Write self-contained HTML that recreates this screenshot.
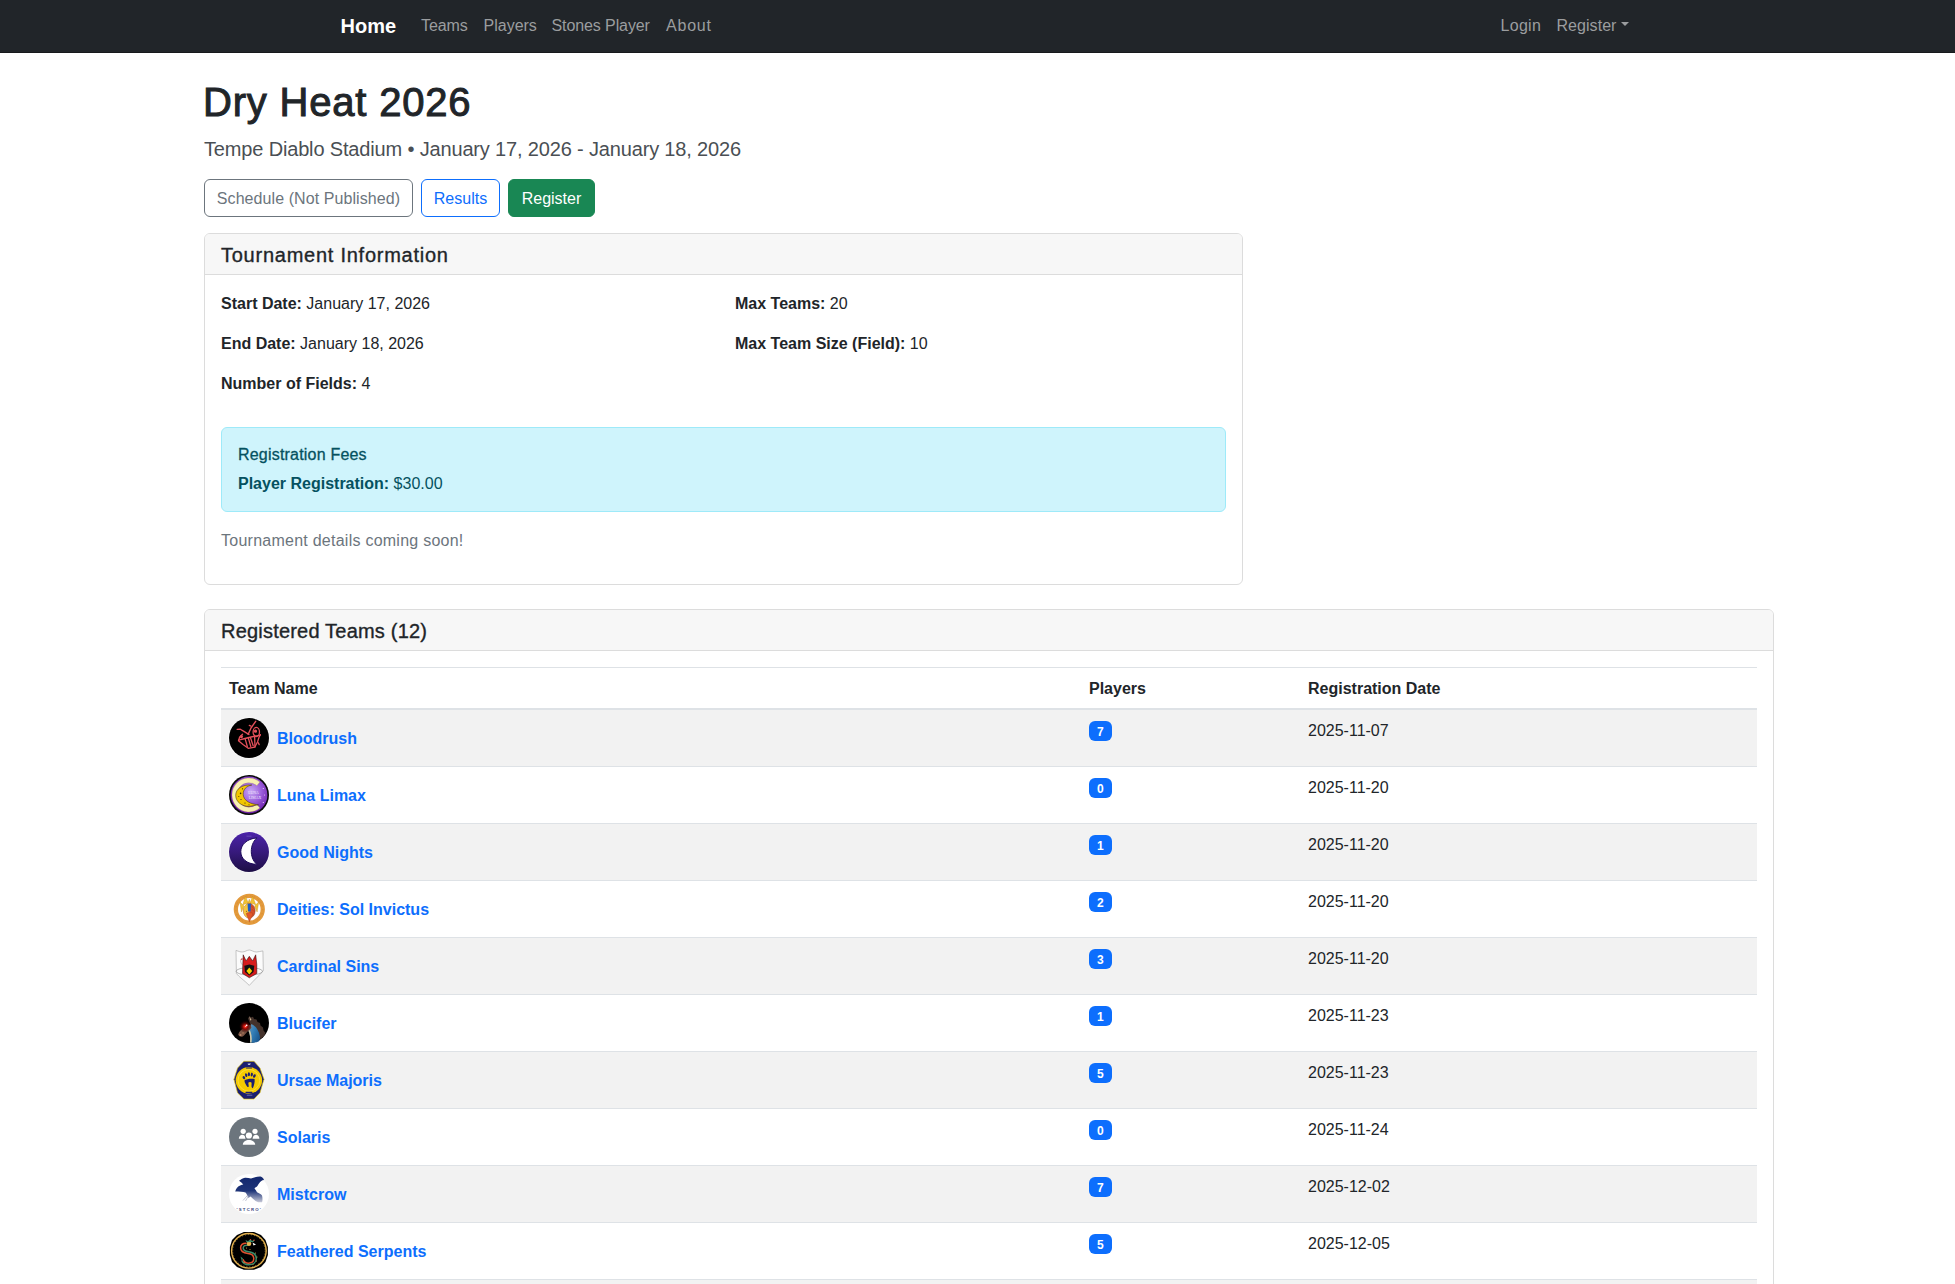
<!DOCTYPE html>
<html><head><meta charset="utf-8"><title>Dry Heat 2026</title>
<style>
*{box-sizing:border-box;margin:0;padding:0}
html,body{width:1955px;height:1284px;overflow:hidden;background:#fff}
body{font-family:"Liberation Sans",sans-serif;font-size:16px;line-height:24px;color:#212529;position:relative}
b,strong{font-weight:700}
.nav{position:absolute;left:0;top:0;width:1955px;height:53px;background:#212529;border-bottom:1px solid #17191c}
.nav span{position:absolute;top:14px;line-height:24px;white-space:nowrap;color:#9b9d9f}
.nav .brand{color:#fff;font-size:20px;font-weight:700;top:11px;line-height:30px}
.caret{position:absolute;left:1621px;top:22px;width:0;height:0;border-left:4px solid transparent;border-right:4px solid transparent;border-top:4px solid #9b9d9f}
.main{position:absolute;left:204px;top:77px;width:1570px}
h1{font-size:40px;line-height:48px;font-weight:400;margin-bottom:8px;color:#212529;letter-spacing:0.8px;-webkit-text-stroke:1px #212529;position:relative;top:1px;left:-1px}
.lead{font-size:20px;line-height:30px;font-weight:400;margin-bottom:16px;color:#4a4f54;letter-spacing:-0.16px;position:relative;top:1px}
.btns{height:38px;margin-bottom:16px;position:relative}
.btn{position:absolute;top:0;height:38px;border:1px solid;border-radius:6px;text-align:center;line-height:36px;font-size:16px;white-space:nowrap}
.b1{left:0;width:209px;color:#6c757d;border-color:#6c757d}
.b2{left:217px;width:79px;color:#0d6efd;border-color:#0d6efd}
.b3{left:304px;width:87px;color:#fff;background:#198754;border-color:#198754}
.card{border:1px solid #dcdcdc;border-radius:6px;background:#fff;overflow:hidden}
.card-h{background:#f7f7f7;border-bottom:1px solid #dcdcdc;padding:8px 16px;height:41px}
.card-h h5{font-size:20px;line-height:24px;font-weight:400;color:#212529;-webkit-text-stroke:0.35px #212529;position:relative;top:1px}
.card-b{padding:16px}
.c1{width:1039px;height:352px;margin-bottom:24px}
.row{display:flex}
.col{width:514px;flex:none}
.col p{margin-bottom:16px;position:relative;top:1px}
.alert{margin-top:16px;background:#cff4fc;border:1px solid #9eeaf9;border-radius:6px;padding:16px;color:#055160;height:85px}
.alert h6{font-size:16px;line-height:19px;font-weight:400;margin-bottom:8px;-webkit-text-stroke:0.3px #055160;position:relative;top:1px;letter-spacing:0.2px}
.alert p{position:relative;top:1px}
.muted{color:#6c757d;margin-top:16px;position:relative;top:1px;letter-spacing:0.25px}
.c2{width:1570px;height:700px}
table{border-collapse:collapse;width:1536px;table-layout:fixed}
th{text-align:left;font-weight:700;padding:9px 8px 7px;height:40px;vertical-align:top}
thead tr{border-top:1px solid #dee2e6;border-bottom:2px solid #dee2e6}
tbody tr{border-bottom:1px solid #dee2e6;height:57px}
tbody tr.s td{background:#f2f2f2}
td{padding:8px;vertical-align:top}
td .d{position:relative;top:1px}
.tn{display:flex;align-items:center;height:40px}
.logo{width:40px;height:40px;flex:none;margin-right:8px;display:block;overflow:visible}
.tn a{color:#0d6efd;font-weight:700;text-decoration:none;position:relative;top:1px}
.badge{display:inline-block;background:#0d6efd;color:#fff;font-size:12px;font-weight:700;line-height:12px;padding:5px 8px 3px;border-radius:6px;margin-top:3px;vertical-align:top;height:20px}
</style></head><body>
<div class="nav">
  <span class="brand" style="left:340.5px">Home</span>
  <span style="left:421px;letter-spacing:-0.1px">Teams</span>
  <span style="left:483.5px">Players</span>
  <span style="left:551.5px;letter-spacing:-0.1px">Stones Player</span>
  <span style="left:666px;letter-spacing:0.8px">About</span>
  <span style="left:1500.5px;letter-spacing:0.3px">Login</span>
  <span style="left:1556.5px;letter-spacing:0.05px">Register</span>
  <i class="caret"></i>
</div>
<div class="main">
  <h1>Dry Heat 2026</h1>
  <p class="lead">Tempe Diablo Stadium • January 17, 2026 - January 18, 2026</p>
  <div class="btns">
    <div class="btn b1"><span style="position:relative;top:1px;letter-spacing:0.08px">Schedule (Not Published)</span></div>
    <div class="btn b2"><span style="position:relative;top:1px">Results</span></div>
    <div class="btn b3"><span style="position:relative;top:1px">Register</span></div>
  </div>
  <div class="card c1">
    <div class="card-h"><h5 style="letter-spacing:0.75px">Tournament Information</h5></div>
    <div class="card-b">
      <div class="row">
        <div class="col">
          <p><b>Start Date:</b> January 17, 2026</p>
          <p><b>End Date:</b> January 18, 2026</p>
          <p><b>Number of Fields:</b> 4</p>
        </div>
        <div class="col">
          <p><b>Max Teams:</b> 20</p>
          <p><b>Max Team Size (Field):</b> 10</p>
        </div>
      </div>
      <div class="alert">
        <h6>Registration Fees</h6>
        <p><b>Player Registration:</b> $30.00</p>
      </div>
      <p class="muted">Tournament details coming soon!</p>
    </div>
  </div>
  <div class="card c2">
    <div class="card-h"><h5 style="letter-spacing:0.2px">Registered Teams (12)</h5></div>
    <div class="card-b">
      <table>
        <colgroup><col style="width:860px"><col style="width:219px"><col style="width:457px"></colgroup>
        <thead><tr><th>Team Name</th><th>Players</th><th>Registration Date</th></tr></thead>
        <tbody>
<tr class="s"><td><div class="tn"><svg class="logo" viewBox="0 0 40 40"><circle cx="20" cy="20" r="20.6" fill="#fff" opacity="0.85"/><circle cx="20" cy="20" r="20" fill="#000"/>
<g fill="none" stroke="#e5505a" stroke-width="1.3" stroke-linecap="round" stroke-linejoin="round">
<path d="M26.7,3.3 L22,10 L19.2,16.3" stroke-width="1.4"/>
<path d="M8.1,11.3 L11.3,11.2 L14.9,13.4 L18.5,15.6 L20,16.5"/>
<path d="M20.3,7.4 L22,8.1"/>
<ellipse cx="27.3" cy="14" rx="3.2" ry="4.6"/>
<path d="M13.5,16.3 L10.6,19.2 L9.5,22.8 L14,26.5 L19.2,30.3 L25.7,29.2 L28.5,24 L30,19.2 L31.4,16.6"/>
<path d="M9.6,22.2 L16,20.5 L22,19 L31.3,17.2"/>
<path d="M16.3,21.3 L18.3,28.5 M19.4,20.3 L21.8,28.5 M21.5,19.8 L24.2,27.8 M25.6,17.2 L26,29"/>
<path d="M29.3,24.8 L30.2,26.6"/>
</g>
<circle cx="26.5" cy="13.2" r="1.6" fill="#e5505a"/><circle cx="12.4" cy="18.6" r="1.6" fill="#e5505a"/>
</svg><a>Bloodrush</a></div></td><td><span class="badge">7</span></td><td><span class="d">2025-11-07</span></td></tr>
<tr><td><div class="tn"><svg class="logo" viewBox="0 0 40 40"><defs><radialGradient id="lg1" cx="0.55" cy="0.4" r="0.6"><stop offset="0" stop-color="#c9a8f4"/><stop offset="0.5" stop-color="#9a5cda"/><stop offset="1" stop-color="#6a1aa8"/></radialGradient></defs>
<circle cx="20" cy="20" r="20" fill="#0a0a0a"/><circle cx="20" cy="20" r="18.4" fill="url(#lg1)"/>
<path d="M30.9,7 A17,17 0 1 0 30.9,33 L27.8,29.35 A12.2,12.2 0 1 1 27.8,10.65 Z" fill="#f8f0b2" stroke="#9a8040" stroke-width="0.25"/>
<path d="M22.8,10 C13,9.3 6.7,14 6.7,20.3 C6.7,27 13,31.5 20,31.4 L29.5,29.8 C22,29.3 14.6,26 14.2,19.5 C13.9,14.5 17.5,11 22.8,10 Z" fill="#f2c600" stroke="#3a2a00" stroke-width="0.5"/>
<g fill="#3a2a00"><circle cx="13.5" cy="13.8" r="0.6"/><circle cx="11.6" cy="18.4" r="0.8"/><circle cx="12" cy="24.5" r="0.6"/><circle cx="16" cy="28" r="0.6"/><circle cx="20" cy="29.8" r="0.5"/><circle cx="9.8" cy="21.5" r="0.5"/></g>
<text x="24.5" y="19.4" font-family="Liberation Serif" font-size="3.8" fill="#f2e8ff" text-anchor="middle">LUNA</text>
<text x="26" y="23.6" font-family="Liberation Serif" font-size="3.8" fill="#f2e8ff" text-anchor="middle">LIMAX</text>
<g fill="#f4e0ff"><circle cx="34.3" cy="13.5" r="0.6"/><circle cx="35.6" cy="20" r="0.5"/><circle cx="34.3" cy="27.5" r="0.6"/></g>
</svg><a>Luna Limax</a></div></td><td><span class="badge">0</span></td><td><span class="d">2025-11-20</span></td></tr>
<tr class="s"><td><div class="tn"><svg class="logo" viewBox="0 0 40 40"><defs><linearGradient id="gg1" x1="0" y1="0" x2="0" y2="1"><stop offset="0" stop-color="#4c23aa"/><stop offset="0.5" stop-color="#371a7c"/><stop offset="1" stop-color="#1d0e45"/></linearGradient></defs>
<circle cx="20" cy="20" r="20.6" fill="#fff" opacity="0.85"/><circle cx="20" cy="20" r="20" fill="url(#gg1)"/>
<path d="M27.8,5.9 C17.5,6.8 11.8,13 11.8,19.6 C11.8,26.5 17.5,32 27.8,32.4 C23.5,28.5 22.3,23.5 22.3,19.4 C22.3,14.5 23.8,9.8 27.8,5.9 Z" fill="#fff" stroke="#1c0a5a" stroke-width="1"/>
<rect x="17.5" y="3.8" width="5" height="0.6" fill="#7a66c0"/>
</svg><a>Good Nights</a></div></td><td><span class="badge">1</span></td><td><span class="d">2025-11-20</span></td></tr>
<tr><td><div class="tn"><svg class="logo" viewBox="0 0 40 40">
<circle cx="20.3" cy="20.3" r="13.45" fill="none" stroke="#e39a3c" stroke-width="4.3"/>
<circle cx="20.3" cy="20.3" r="13.45" fill="none" stroke="#b86a20" stroke-width="0.6" stroke-dasharray="1 3" opacity="0.6"/>
<g fill="#f2c232" stroke="#c08818" stroke-width="0.35" stroke-linejoin="round">
<path d="M20.3,10.2 L22,15 L18.6,15 Z"/>
<path d="M16.3,7.2 L19.4,14 L13.8,15.8 Z"/>
<path d="M23.6,7.2 L26.8,15.8 L21.2,14 Z"/>
<path d="M10.8,12.8 L15,17 L12.5,23 Z"/>
<path d="M29.8,12.8 L28.1,23 L25.6,17 Z"/>
</g>
<ellipse cx="20.3" cy="21.8" rx="5.9" ry="7.3" fill="#d5502a" stroke="#7a3a18" stroke-width="0.45"/>
<path d="M20.3,14.5 C17,14.5 14.4,17.5 14.4,21.8 C14.4,25.5 16.5,28.5 20.3,29.1 Z" fill="#f5c640"/>
<path d="M18.6,14.8 L22,14.8 L21.6,22.5 L19,22.5 Z" fill="#1e5ec4"/>
<circle cx="17.4" cy="22.3" r="0.5" fill="#6a3a10"/>
<path d="M17.2,24.5 C18.5,23.3 22.5,23.3 24,24.5 C23,27.5 21.5,30 20.4,32.8 C19.5,30 18,27 17.2,24.5 Z" fill="#e2582a" stroke="#9a3010" stroke-width="0.3"/>
<path d="M22.5,17 L24.5,19.5 M22.8,20 L25,22.5" stroke="#a83a1a" stroke-width="0.4"/>
</svg><a>Deities: Sol Invictus</a></div></td><td><span class="badge">2</span></td><td><span class="d">2025-11-20</span></td></tr>
<tr class="s"><td><div class="tn"><svg class="logo" viewBox="0 0 40 40">
<path d="M7,4.4 C10,5.5 11.5,6 13.1,6 C16,6 18,4 20.3,4 C22.5,4 24.5,6 27.5,6 C29.5,6 31.5,5.2 33.9,4.9 L34.3,24.5 C31,29 26,33 20.3,39.4 C15,34 10,31 7.4,27.5 Z" fill="#fbfbfb" stroke="#9a9a9a" stroke-width="0.55"/>
<ellipse cx="20.3" cy="25.3" rx="13.2" ry="3.7" fill="none" stroke="#8a8a8a" stroke-width="0.6"/>
<path d="M13.5,19 C11.5,17 11.2,14.5 12.3,13.4" fill="none" stroke="#8a8a8a" stroke-width="0.5"/>
<path d="M11.4,13.6 L13.3,12 L13.3,13.8 Z" fill="#d01818"/>
<path d="M14.2,8.8 L17.1,14.9 L20.3,10.3 L23.6,14.9 L26.7,8.8 L27.8,18.5 L27.8,27.5 L20.3,31.8 L13.5,27.5 L13.8,18.5 Z" fill="#d61c1c" stroke="#1a0000" stroke-width="0.5" stroke-linejoin="round"/>
<path d="M15.3,19.8 L20.3,18.5 L25.3,19.8 L24.5,26 L20.3,29.6 L16,26 Z" fill="#111"/>
<path d="M20.3,21.6 L23.2,24.9 L20.3,28.4 L17.4,24.9 Z" fill="#f5d000"/>
</svg><a>Cardinal Sins</a></div></td><td><span class="badge">3</span></td><td><span class="d">2025-11-20</span></td></tr>
<tr><td><div class="tn"><svg class="logo" viewBox="0 0 40 40"><defs><radialGradient id="bg1" cx="0.44" cy="0.56" r="0.28"><stop offset="0" stop-color="#fff"/><stop offset="0.1" stop-color="#ff2a1a"/><stop offset="0.4" stop-color="#8a0806"/><stop offset="1" stop-color="#200000" stop-opacity="0"/></radialGradient>
<linearGradient id="bg2" x1="0" y1="0" x2="1" y2="0.6"><stop offset="0" stop-color="#7a9ab0"/><stop offset="0.5" stop-color="#3480b8"/><stop offset="1" stop-color="#1c5a92"/></linearGradient></defs>
<circle cx="20" cy="20" r="20" fill="#000"/>
<path d="M19,15.5 L20.5,13 L22,14.5 L24,13.8 L25,16 L27.5,16.5 L28.5,19 L31,20 L31.5,22.5 L34,24.5 L34.5,27.5 L36.5,30 L35,33 L32,35.5 L28,37 L24,28 Z" fill="#44322b"/>
<path d="M20.5,13.5 L22.5,17 L21,17.5 Z" fill="#c8b090"/>
<path d="M22.5,21 C27,23 30,28 30.8,33 C31.2,35.5 30.8,37 30,38.2 C27,39.6 23.5,40 21,39.6 C21.5,35 21,30 19,27 Z" fill="url(#bg2)"/>
<path d="M21,39.6 C21.5,35 21,30 19,27 L20.2,26 C22.5,29.5 23.2,34.5 22.6,39.6 Z" fill="#cfc7a8"/>
<path d="M9.2,31.5 C10,28.5 13,25.8 16.5,23.8 L21.5,21.5 L22.5,24.8 C20,27 17.5,29.5 15,32.5 C13.2,34.5 10.2,34 9.2,31.5 Z" fill="#7a5444"/>
<circle cx="11.5" cy="32" r="1" fill="#c08a6a"/><circle cx="14" cy="30" r="0.8" fill="#b07a5a"/>
<circle cx="17.6" cy="22.3" r="11" fill="url(#bg1)"/>
<circle cx="17.6" cy="22.3" r="0.9" fill="#fff"/>
</svg><a>Blucifer</a></div></td><td><span class="badge">1</span></td><td><span class="d">2025-11-23</span></td></tr>
<tr class="s"><td><div class="tn"><svg class="logo" viewBox="0 0 40 40">
<path d="M14.9,1.3 L25,1.3 L31,8.1 L35,19.2 L31,32.8 L25,39.1 L14.9,39.1 L8.5,32.8 L4.9,19.2 L8.5,8.1 Z" fill="#1c1f70" stroke="#f0d000" stroke-width="0.6"/>
<circle cx="19.9" cy="20.3" r="13.2" fill="#f5cb00"/>
<circle cx="19.9" cy="20.3" r="10.9" fill="none" stroke="#ffe870" stroke-width="0.5"/>
<g fill="#1c1f70"><ellipse cx="14.9" cy="17.6" rx="1.2" ry="1.7" transform="rotate(-30 14.9 17.6)"/><ellipse cx="17.2" cy="15.1" rx="1.1" ry="2" transform="rotate(-15 17.2 15.1)"/><ellipse cx="19.9" cy="14.3" rx="1.1" ry="2"/><ellipse cx="22.8" cy="14.6" rx="1.1" ry="2" transform="rotate(10 22.8 14.6)"/><ellipse cx="25.4" cy="16" rx="1.2" ry="1.8" transform="rotate(25 25.4 16)"/>
<path d="M15.4,20.6 C17,18.8 23,18.3 25.6,19 C26,22.5 25,25.5 24,27.8 L23.2,28.2 L22.5,26.5 L22.6,22.8 C21.8,21.8 20,22 19.3,22.8 L19.8,26.8 L18.5,27 C17,25 15.6,23 15.4,20.6Z"/>
<rect x="17" y="7.5" width="6" height="1" rx="0.5"/><rect x="16.5" y="31.8" width="7" height="1.2" rx="0.5"/></g>
<path d="M18.5,3.8 L21.8,3.6 L21,4.8 L19.3,4.8 Z" fill="#fff"/>
<rect x="17.8" y="34.8" width="5.5" height="0.7" fill="#8a90c0"/>
</svg><a>Ursae Majoris</a></div></td><td><span class="badge">5</span></td><td><span class="d">2025-11-23</span></td></tr>
<tr><td><div class="tn"><svg class="logo" viewBox="0 0 40 40">
<circle cx="20" cy="20" r="20" fill="#6c757d"/>
<g fill="#fff"><circle cx="14.2" cy="14.3" r="2.6"/><circle cx="26" cy="14.3" r="2.6"/>
<path d="M9.8,21.7 C9.8,19 11.8,17.8 13.2,17.8 C14.8,17.8 16.5,19 16.5,21.7 Z"/>
<path d="M23.6,21.7 C23.6,19 25.4,17.8 27,17.8 C28.5,17.8 30.4,19 30.4,21.7 Z"/></g>
<circle cx="19.9" cy="18.5" r="3.9" fill="#6c757d"/>
<path d="M13,28.3 C13,24 16.5,22.2 19.9,22.2 C23.3,22.2 27,24 27,28.3 Z" fill="#6c757d"/>
<g fill="#fff"><circle cx="19.9" cy="18.5" r="3.1"/>
<path d="M13.8,27.8 C13.8,24.5 16.8,22.9 19.9,22.9 C23,22.9 26.2,24.5 26.2,27.8 Z"/></g>
</svg><a>Solaris</a></div></td><td><span class="badge">0</span></td><td><span class="d">2025-11-24</span></td></tr>
<tr class="s"><td><div class="tn"><svg class="logo" viewBox="0 0 40 40"><defs><linearGradient id="mg1" x1="0" y1="0" x2="0" y2="1"><stop offset="0" stop-color="#13286e"/><stop offset="0.55" stop-color="#1e3478"/><stop offset="1" stop-color="#c8cad8"/></linearGradient></defs>
<circle cx="20" cy="20" r="20" fill="#fff"/>
<path d="M6.2,17.6 C7,14.5 8.5,12.5 11.7,11.2 C12.5,10.8 13.6,10.6 14.3,10.6 L12.4,8.6 L10,6.8 C11.5,5.8 13.5,4.3 16,3.8 C18,3.6 20,4.3 22,4.4 C25,3.6 28.5,2.5 31.5,2.6 C33,3 34.5,4.5 35,6 L33.5,6.3 C32,7 30.2,9 29,11 C28.3,12.3 27.2,13.3 26,13.7 L25.5,14.5 C26.5,15.7 27.3,17 28,18.3 C30,19.5 32,20 33,21.5 C33.8,24 33.5,27 33,28.2 C31,28.5 29,28.3 27.5,27.5 C25,26 23,24 21.5,22.5 L19.5,24 C18.5,22.3 18,20 16.5,18.5 C14,17.5 10,18 6.2,17.6 Z" fill="url(#mg1)"/>
<path d="M18.8,21 L14,26.5 M19.5,22 L16.5,27" stroke="#9aa0b8" stroke-width="0.6"/>
<text x="20.3" y="36.6" font-family="Liberation Sans" font-weight="700" font-size="4.3" letter-spacing="1.2" fill="#3a4680" text-anchor="middle">'STCRO'</text>
</svg><a>Mistcrow</a></div></td><td><span class="badge">7</span></td><td><span class="d">2025-12-02</span></td></tr>
<tr><td><div class="tn"><svg class="logo" viewBox="0 0 40 40">
<path d="M14.9,0.9 L24.9,0.9 L32,4 L36.5,9 L38.9,16 L38.9,24 L36.5,31 L32,36 L24.9,38.8 L14.9,38.8 L8,36 L3,31 L0.9,24 L0.9,16 L3,9 L8,4 Z" fill="#000"/>
<circle cx="19.9" cy="19.8" r="17.3" fill="none" stroke="#e2b04e" stroke-width="1.4"/>
<circle cx="19.9" cy="19.8" r="16.2" fill="none" stroke="#e2b04e" stroke-width="0.9" stroke-dasharray="0.7 2.3"/>
<path d="M17.5,12.2 C13.5,12 11.6,13.8 11.6,16.8 C11.6,20.5 14.5,22 19,22.4 C23.2,22.8 24.8,24.5 24.8,27.6 C24.8,30.8 22.5,32.2 19.5,32.2 C16.5,32.2 14.8,30.8 14,28.2" fill="none" stroke="#e0502e" stroke-width="1.5"/>
<path d="M19.5,14.2 C16,14 14.2,14.8 14.2,17 C14.2,19.2 16.2,20.3 19.5,20.8 C25,21.6 27.3,23.5 27.3,27.5 C27.3,31.5 24,33.8 19.5,33.8 C16,33.8 14,32.2 12.8,29.5" fill="none" stroke="#3a8a6a" stroke-width="1.5"/>
<g fill="#e2b04e"><circle cx="17.5" cy="17" r="0.5"/><circle cx="21" cy="18.5" r="0.5"/><circle cx="26.5" cy="22" r="0.5"/><circle cx="28" cy="26" r="0.5"/><circle cx="27.5" cy="30" r="0.5"/><circle cx="24" cy="33.5" r="0.5"/><circle cx="15" cy="31.5" r="0.5"/></g>
<circle cx="20" cy="12.8" r="2.3" fill="#e2b04e"/>
<path d="M23.5,11.5 L27,13.5 L24.5,14.5 Z" fill="#fff"/>
<path d="M16.5,9 L19,10.3 L21.5,8 L23,10 L25.5,8.5 L24.5,11 L17.5,11.2 Z" fill="#3a8a6a"/>
<circle cx="21.5" cy="8.6" r="0.7" fill="#e0502e"/><circle cx="25" cy="9.2" r="0.7" fill="#e0502e"/>
<path d="M11.5,25.5 L14,27.5 L12.8,29.8 Z" fill="#3a8a6a"/>
</svg><a>Feathered Serpents</a></div></td><td><span class="badge">5</span></td><td><span class="d">2025-12-05</span></td></tr>
<tr class="s"><td><div class="tn"><svg class="logo" viewBox="0 0 40 40">
<circle cx="20" cy="20" r="20" fill="#6c757d"/>
<g fill="#fff"><circle cx="14.2" cy="14.3" r="2.6"/><circle cx="26" cy="14.3" r="2.6"/>
<path d="M9.8,21.7 C9.8,19 11.8,17.8 13.2,17.8 C14.8,17.8 16.5,19 16.5,21.7 Z"/>
<path d="M23.6,21.7 C23.6,19 25.4,17.8 27,17.8 C28.5,17.8 30.4,19 30.4,21.7 Z"/></g>
<circle cx="19.9" cy="18.5" r="3.9" fill="#6c757d"/>
<path d="M13,28.3 C13,24 16.5,22.2 19.9,22.2 C23.3,22.2 27,24 27,28.3 Z" fill="#6c757d"/>
<g fill="#fff"><circle cx="19.9" cy="18.5" r="3.1"/>
<path d="M13.8,27.8 C13.8,24.5 16.8,22.9 19.9,22.9 C23,22.9 26.2,24.5 26.2,27.8 Z"/></g>
</svg><a>Team</a></div></td><td><span class="badge">1</span></td><td><span class="d">2025-12-06</span></td></tr>
<tr><td><div class="tn"><svg class="logo" viewBox="0 0 40 40">
<circle cx="20" cy="20" r="20" fill="#6c757d"/>
<g fill="#fff"><circle cx="14.2" cy="14.3" r="2.6"/><circle cx="26" cy="14.3" r="2.6"/>
<path d="M9.8,21.7 C9.8,19 11.8,17.8 13.2,17.8 C14.8,17.8 16.5,19 16.5,21.7 Z"/>
<path d="M23.6,21.7 C23.6,19 25.4,17.8 27,17.8 C28.5,17.8 30.4,19 30.4,21.7 Z"/></g>
<circle cx="19.9" cy="18.5" r="3.9" fill="#6c757d"/>
<path d="M13,28.3 C13,24 16.5,22.2 19.9,22.2 C23.3,22.2 27,24 27,28.3 Z" fill="#6c757d"/>
<g fill="#fff"><circle cx="19.9" cy="18.5" r="3.1"/>
<path d="M13.8,27.8 C13.8,24.5 16.8,22.9 19.9,22.9 C23,22.9 26.2,24.5 26.2,27.8 Z"/></g>
</svg><a>Team</a></div></td><td><span class="badge">1</span></td><td><span class="d">2025-12-06</span></td></tr>
        </tbody>
      </table>
    </div>
  </div>
</div>
</body></html>
